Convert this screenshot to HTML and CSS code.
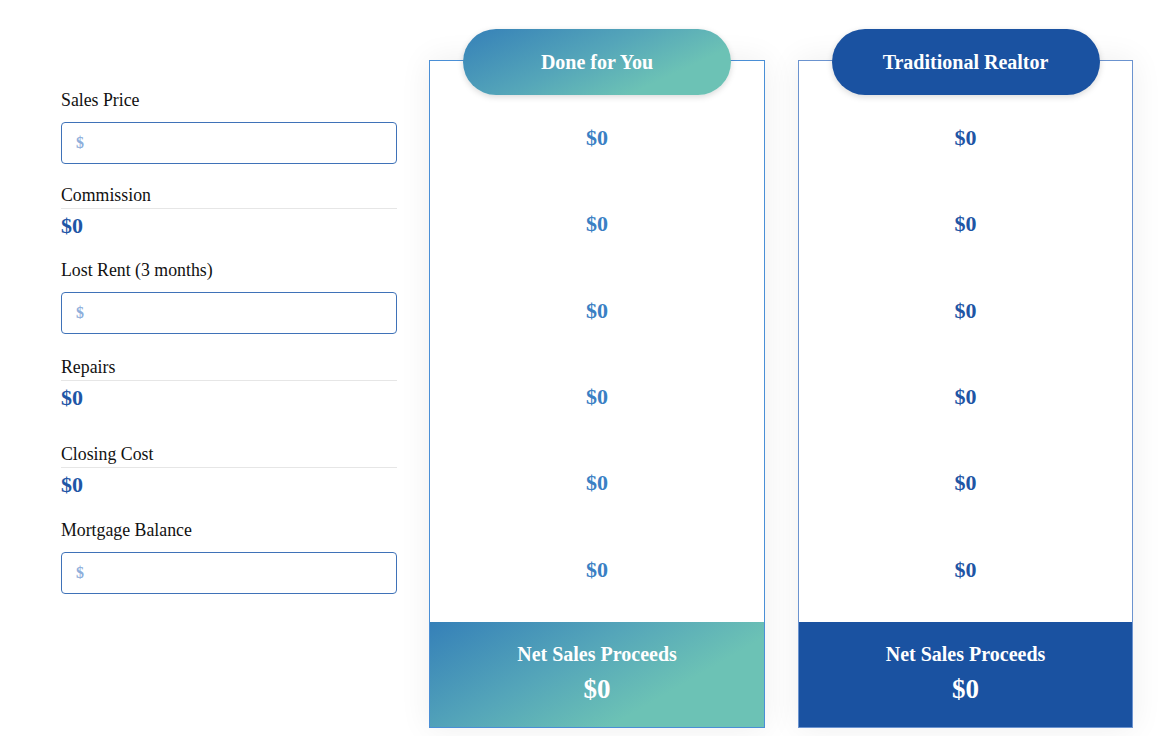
FILE: index.html
```html
<!DOCTYPE html>
<html>
<head>
<meta charset="utf-8">
<link rel="stylesheet" href="styles.css">
</head>
<body>
<div class="page">
  <div class="inputs">
    <div class="field field-input first">
      <div class="label">Sales Price</div>
      <div class="input"><span class="ph">$</span></div>
    </div>
    <div class="field field-calc">
      <div class="label ruled">Commission</div>
      <div class="amount">$0</div>
    </div>
    <div class="field field-input">
      <div class="label">Lost Rent (3 months)</div>
      <div class="input"><span class="ph">$</span></div>
    </div>
    <div class="field field-calc spaced">
      <div class="label ruled">Repairs</div>
      <div class="amount">$0</div>
    </div>
    <div class="field field-calc">
      <div class="label ruled">Closing Cost</div>
      <div class="amount">$0</div>
    </div>
    <div class="field field-input last">
      <div class="label">Mortgage Balance</div>
      <div class="input"><span class="ph">$</span></div>
    </div>
  </div>

  <div class="card card-dfy">
    <div class="pill">Done for You</div>
    <div class="rows">
      <div class="row">$0</div>
      <div class="row">$0</div>
      <div class="row">$0</div>
      <div class="row">$0</div>
      <div class="row">$0</div>
      <div class="row">$0</div>
    </div>
    <div class="footer">
      <div class="footer-title">Net Sales Proceeds</div>
      <div class="footer-amount">$0</div>
    </div>
  </div>

  <div class="card card-trad">
    <div class="pill">Traditional Realtor</div>
    <div class="rows">
      <div class="row">$0</div>
      <div class="row">$0</div>
      <div class="row">$0</div>
      <div class="row">$0</div>
      <div class="row">$0</div>
      <div class="row">$0</div>
    </div>
    <div class="footer">
      <div class="footer-title">Net Sales Proceeds</div>
      <div class="footer-amount">$0</div>
    </div>
  </div>
</div>
</body>
</html>
```

FILE: styles.css
```css
html, body {
  margin: 0;
  padding: 0;
  background: #ffffff;
}
body {
  font-family: "Liberation Serif", "Times New Roman", serif;
  color: #111111;
  width: 1172px;
  height: 736px;
  overflow: hidden;
}
.page {
  display: flex;
  align-items: flex-start;
  padding: 60px 0 0 61px;
  gap: 32px;
}
.inputs {
  width: 336px;
  display: flex;
  flex-direction: column;
  margin-top: 30px;
}
.label {
  font-size: 17.8px;
  line-height: 20px;
}
.field {
  margin-top: 21px;
}
.field.first {
  margin-top: 0;
}
.field-input .label {
  margin-bottom: 12px;
}
.input {
  box-sizing: border-box;
  height: 42px;
  border: 1px solid #3f72b8;
  border-radius: 4px;
  display: flex;
  align-items: center;
  padding-left: 14px;
}
.ph {
  color: #8eaedb;
  font-size: 16px;
  font-weight: bold;
}
.label.ruled {
  padding-bottom: 3px;
  border-bottom: 1px solid #e6e6e6;
}
.amount {
  margin-top: 4px;
  font-size: 22px;
  font-weight: bold;
  line-height: 25px;
  color: #1f56a6;
}
.field-calc + .field {
  margin-top: 22px;
}
.field-input + .field.spaced {
  margin-top: 22.5px;
}
.field.spaced + .field {
  margin-top: 34px;
}
.field.last {
  margin-top: 23px;
}

.card {
  box-sizing: border-box;
  width: 336px;
  height: 668px;
  background: #ffffff;
  display: flex;
  flex-direction: column;
  box-shadow: 0 0 30px rgba(0, 0, 0, 0.07);
}
.card-dfy {
  border: 1px solid #4a8fd6;
}
.card-trad {
  width: 335px;
  margin-left: 1px;
  border: 1px solid #6b93cf;
}
.pill {
  width: 268px;
  height: 66px;
  margin: -32px auto 0;
  border-radius: 33px;
  display: flex;
  align-items: center;
  justify-content: center;
  color: #ffffff;
  font-size: 20px;
  font-weight: bold;
  box-shadow: 0 2px 6px rgba(0, 0, 0, 0.15);
}
.card-dfy .pill {
  background: linear-gradient(155deg, #3580b8 0%, #55a6b9 45%, #6cc2b5 75%, #6cc2b5 100%);
}
.card-trad .pill {
  background: #1a52a1;
}
.rows {
  display: flex;
  flex-direction: column;
  padding-bottom: 9px;
}
.row {
  height: 86.3px;
  display: flex;
  align-items: center;
  justify-content: center;
  font-size: 22px;
  font-weight: bold;
}
.card-dfy .row {
  color: #3a80c4;
}
.card-trad .row {
  color: #1f55a5;
}
.footer {
  flex: 1;
  display: flex;
  flex-direction: column;
  align-items: center;
  color: #ffffff;
  font-weight: bold;
  padding-top: 21px;
}
.card-dfy .footer {
  background: linear-gradient(150deg, #3580b8 0%, #55a6b9 40%, #6cc2b5 70%, #6cc2b5 100%);
}
.card-trad .footer {
  background: #1a52a1;
}
.footer-title {
  font-size: 20px;
  line-height: 23px;
}
.footer-amount {
  font-size: 27px;
  line-height: 32px;
  margin-top: 7px;
}
```
